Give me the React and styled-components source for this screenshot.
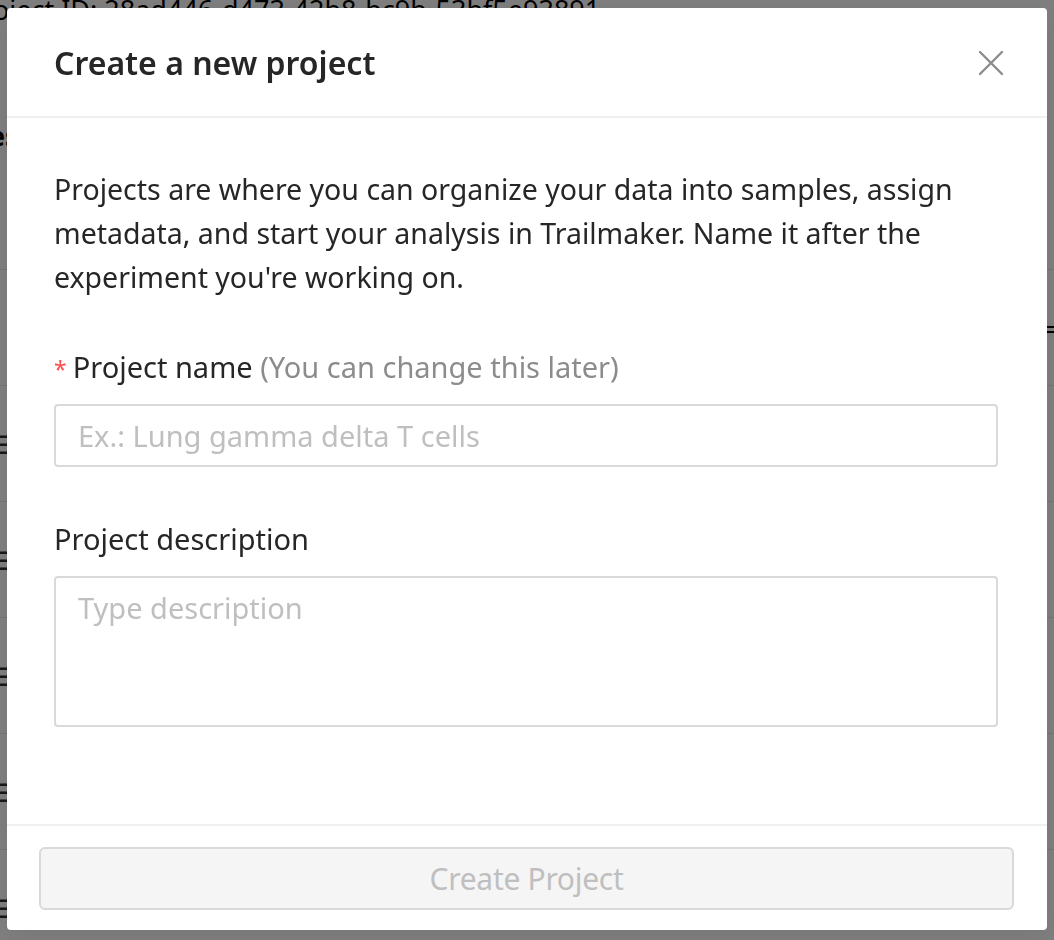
import React from "react";
import styled, { createGlobalStyle } from "styled-components";

const GlobalStyle = createGlobalStyle`
  html, body { margin: 0; padding: 0; background: #ffffff; overflow: hidden; }
  body { font-family: "Noto Sans", "Open Sans", sans-serif; color: #262626; }
  * { box-sizing: border-box; }
`;

const Page = styled.div`
  width: 1054px;
  height: 940px;
  overflow: hidden;
  background: #ffffff;
`;

const PageHeading = styled.div`
  margin: -8px 0 0 -34px;
  font-size: 27px;
  line-height: 36px;
  white-space: nowrap;
  color: #000;
`;

const SideTitle = styled.div`
  margin: 90px 0 0 -90px;
  font-size: 26px;
  font-weight: 700;
  color: #000;
`;

const Row = styled.div`
  height: 116px;
  display: flex;
  align-items: center;
  justify-content: space-between;
  border-bottom: 1px solid #e6e6e6;
`;

const Handle = styled.span`
  margin-left: -8px;
  font-size: 26px;
  color: #333;
`;

const RowText = styled.span`
  margin-right: -12px;
  font-size: 28px;
  color: #000;
`;

const Overlay = styled.div`
  position: fixed;
  inset: 0;
  background: rgba(0, 0, 0, 0.5);
`;

const Wrap = styled.div`
  position: fixed;
  inset: 0;
  display: flex;
  justify-content: center;
  align-items: flex-start;
  padding-top: 8px;
`;

const Modal = styled.div`
  width: 1040px;
  background: #ffffff;
  border-radius: 4px;
  box-shadow: 0 6px 32px rgba(0, 0, 0, 0.08);
  display: flex;
  flex-direction: column;
`;

const Header = styled.div`
  display: flex;
  align-items: center;
  justify-content: space-between;
  padding: 33px 32px 31px 47px;
  border-bottom: 2px solid #f0f0f0;
`;

const Title = styled.div`
  font-size: 32px;
  font-weight: 600;
  line-height: 44px;
  color: #262626;
`;

const Close = styled.button`
  width: 48px;
  height: 44px;
  border: 0;
  background: transparent;
  padding: 0;
  display: flex;
  align-items: center;
  justify-content: center;
  cursor: pointer;
`;

const Body = styled.div`
  padding: 49px 49px 48px 47px;
`;

const Intro = styled.p`
  margin: 0 0 46px;
  font-size: 28.5px;
  line-height: 44px;
  color: #262626;
`;

const Field = styled.div`
  margin-bottom: ${(p) => (p.$last ? "0" : "50px")};
`;

const Label = styled.label`
  display: block;
  height: 59px;
  padding-bottom: 15px;
  font-size: 29px;
  line-height: 44px;
  color: #262626;
  white-space: nowrap;
`;

const Star = styled.span`
  color: #ff4d4f;
  margin-right: 6px;
  font-size: 23px;
`;

const Hint = styled.span`
  color: #8c8c8c;
`;

const Input = styled.input`
  display: block;
  width: 100%;
  height: 63px;
  padding: 8px 22px;
  border: 2px solid #d9d9d9;
  border-radius: 4px;
  font-family: inherit;
  font-size: 29px;
  line-height: 44px;
  color: #262626;
  outline: none;
  &::placeholder { color: #bfbfbf; }
`;

const TextArea = styled.textarea`
  display: block;
  width: 100%;
  height: 151px;
  padding: 8px 22px;
  border: 2px solid #d9d9d9;
  border-radius: 4px;
  font-family: inherit;
  font-size: 29px;
  line-height: 44px;
  resize: none;
  outline: none;
  margin-bottom: 49px;
  &::placeholder { color: #bfbfbf; }
`;

const Footer = styled.div`
  padding: 21px 33px 20px 32px;
  border-top: 2px solid #f0f0f0;
`;

const SubmitButton = styled.button`
  display: block;
  width: 100%;
  height: 63px;
  border: 2px solid #d9d9d9;
  border-radius: 6px;
  background: #f5f5f5;
  color: #bfbfbf;
  font-family: "Noto Sans", sans-serif;
  font-size: 30px;
  letter-spacing: -0.3px;
  cursor: not-allowed;
`;

export default function App() {
  return (
    <>
      <GlobalStyle />
      <Page>
        <PageHeading>Project ID: 28ad446-d473-42b8-bc9b-53bf5e93891</PageHeading>
        <SideTitle>Samples</SideTitle>
        {[0, 1, 2, 3, 4, 5, 6].map((i) => (
          <Row key={i}>
            <Handle>{i > 1 ? "☰" : ""}</Handle>
            <RowText>{i === 0 ? "(" : i === 1 ? "=:" : ""}</RowText>
          </Row>
        ))}
      </Page>
      <Overlay />
      <Wrap>
        <Modal role="dialog">
          <Header>
            <Title>Create a new project</Title>
            <Close aria-label="Close">
              <svg width="26" height="26" viewBox="0 0 26 26" fill="none">
                <path d="M2 2 L24 24 M24 2 L2 24" stroke="#8c8c8c" strokeWidth="2.4" strokeLinecap="round" />
              </svg>
            </Close>
          </Header>
          <Body>
            <Intro>
              Projects are where you can organize your data into samples, assign metadata, and start your
              analysis in Trailmaker. Name it after the experiment you're working on.
            </Intro>
            <Field>
              <Label>
                <Star>*</Star>Project name <Hint>(You can change this later)</Hint>
              </Label>
              <Input placeholder="Ex.: Lung gamma delta T cells" />
            </Field>
            <Field $last>
              <Label>Project description</Label>
              <TextArea placeholder="Type description" />
            </Field>
          </Body>
          <Footer>
            <SubmitButton disabled>Create Project</SubmitButton>
          </Footer>
        </Modal>
      </Wrap>
    </>
  );
}
